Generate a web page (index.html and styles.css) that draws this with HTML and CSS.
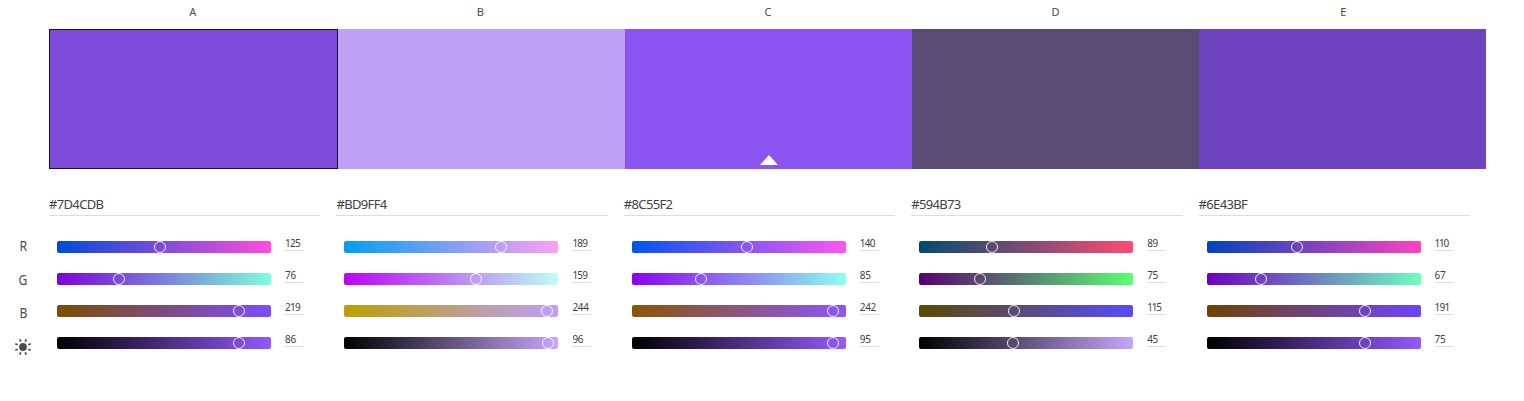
FILE: index.html
```html
<!DOCTYPE html>
<html lang="en">
<head>
<meta charset="utf-8">
<title>Color palette</title>
<link rel="stylesheet" href="styles.css">
</head>
<body>
<main class="palette">
  <div class="letters"><span>A</span><span>B</span><span>C</span><span>D</span><span>E</span></div>
  <div class="swatches" id="swatches"></div>
  <div class="controls">
    <div class="channels">
      <span>R</span><span>G</span><span>B</span>
      <svg class="sun" viewBox="0 0 16 16"><circle cx="8" cy="8" r="3.9" fill="#4b4b4b"/><path d="M5.8 2.6 4.8.3M10.2 2.6l1-2.3M5.8 13.4l-1 2.3M10.2 13.4l1 2.3M2.7 5.8.3 4.8M2.7 10.2l-2.4 1M13.3 5.8l2.4-1M13.3 10.2l2.4 1" stroke="#4b4b4b" stroke-width="1.7" fill="none"/></svg>
    </div>
    <div class="panels" id="panels"></div>
  </div>
</main>
<script src="palette.js"></script>
</body>
</html>
```
FILE: palette.js
```js
const colors = [
  { rgb: [125, 76, 219], level: 86, knobs: [103, 62, 182, 182] },
  { rgb: [189, 159, 244], level: 96, knobs: [157, 132, 203, 204] },
  { rgb: [140, 85, 242], level: 95, knobs: [115, 69, 201, 201] },
  { rgb: [89, 75, 115], level: 45, knobs: [73, 61, 95, 94] },
  { rgb: [110, 67, 191], level: 75, knobs: [90, 54, 158, 158] }
];
const css = c => `rgb(${c.join(',')})`;
const hex = c => '#' + c.map(v => v.toString(16).padStart(2, '0')).join('').toUpperCase();

// End colors of a slider: one channel from 0 to 255, or overall brightness.
function ends(rgb, i) {
  if (i === 3) {
    const max = Math.max(...rgb);
    return [[0, 0, 0], rgb.map(v => Math.round(v * 255 / max))];
  }
  return [0, 255].map(v => rgb.map((c, k) => (k === i ? v : c)));
}

// Values containing the narrow digit 1 are set tighter.
function spacing(v) {
  const s = String(v);
  if (s.startsWith('11')) return ' tightest';
  return s.includes('1') ? ' tight' : '';
}

document.getElementById('swatches').innerHTML = colors.map((c, i) =>
  `<div class="swatch${i === 0 ? ' selected' : ''}" style="background:${css(c.rgb)}">${
    i === 2 ? '<svg class="marker" viewBox="0 0 18 10"><path d="M9 0l9 10H0z" fill="#fff"/></svg>' : ''}</div>`).join('');

document.getElementById('panels').innerHTML = colors.map(c =>
  `<section class="panel"><div class="hex">${hex(c.rgb)}</div>${
    [...c.rgb, c.level].map((v, i) => {
      const [a, b] = ends(c.rgb, i);
      return `<div class="row"><div class="bar" style="background:linear-gradient(90deg,${css(a)},${css(b)})"><i class="knob" style="left:${c.knobs[i]}px"></i></div><span class="value${spacing(v)}">${v}</span></div>`;
    }).join('')}</section>`).join('');
```
FILE: styles.css
```css
* { box-sizing: border-box; }
body { margin: 0; background: #fff; color: #4b4b4b; font-family: "Noto Sans", "Open Sans", sans-serif; overflow: hidden; }
.palette { width: 1524px; height: 401px; }
.letters { display: grid; grid-template-columns: repeat(5, 1fr); width: 1438px; height: 29px; margin-left: 49px; text-align: center; font-size: 11px; line-height: 23px; }
.swatches { display: flex; margin-left: 49px; height: 140px; }
.swatch { width: 287px; display: flex; align-items: flex-end; justify-content: center; }
.swatch.selected { width: 289px; border: 1px solid #1b0a3c; }
.marker { width: 18px; height: 10px; margin-bottom: 4px; }
.controls { display: flex; }
.channels { width: 49px; padding: 61px 3px 0 0; display: flex; flex-direction: column; align-items: center; font-size: 13.5px; }
.channels span { height: 33.5px; line-height: 33px; transform: scaleX(.9); }
.sun { width: 16px; height: 16px; margin-top: 8.5px; }
.panels { display: flex; gap: 16px; padding-top: 25px; }
.panel { width: 271.4px; }
.hex { height: 22px; border-bottom: 1px solid #ddd; font-size: 13px; line-height: 21px; letter-spacing: -.65px; margin-bottom: 19px; color: #404040; }
.row { display: flex; height: 32px; padding: 6px 0 0 8px; }
.bar { position: relative; width: 214px; height: 12px; border-radius: 2px; }
.knob { position: absolute; top: 0; width: 12px; height: 12px; margin-left: -6px; border: 1px solid rgba(255,255,255,.9); border-radius: 50%; }
.value { width: 19px; height: 14px; margin: -4px 0 0 14px; border-bottom: 1px solid #ddd; font-size: 10px; line-height: 12px; letter-spacing: -.3px; color: #404040; }
.value.tight { letter-spacing: -.75px; }
.value.tightest { letter-spacing: -1.2px; }
```
